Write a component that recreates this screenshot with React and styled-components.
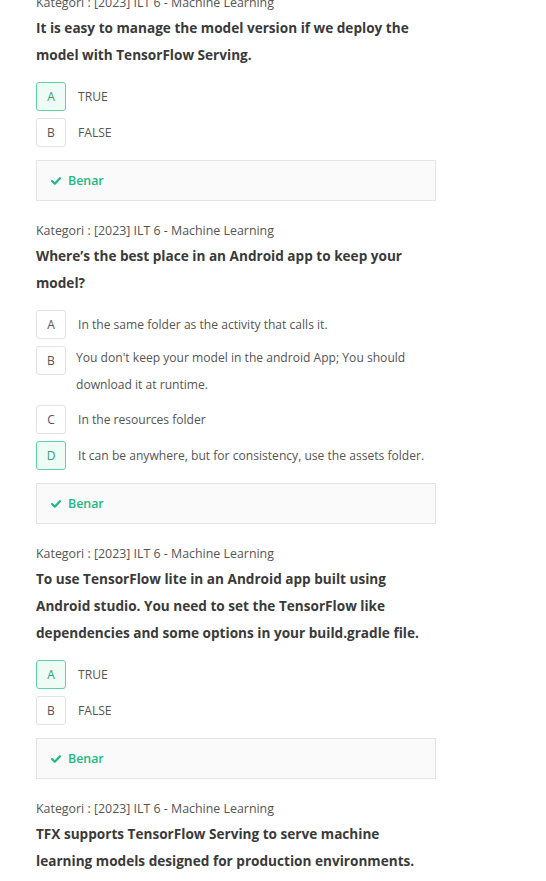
import React from "react";
import styled, { createGlobalStyle } from "styled-components";

const GlobalStyle = createGlobalStyle`
  html, body {
    margin: 0;
    padding: 0;
    background: #ffffff;
    font-family: "Open Sans", "Noto Sans", sans-serif;
  }
`;

const questions = [
  {
    text: "It is easy to manage the model version if we deploy the model with TensorFlow Serving.",
    options: [
      { key: "A", label: "TRUE", picked: true },
      { key: "B", label: "FALSE" },
    ],
  },
  {
    text: "Where\u2019s the best place in an Android app to keep your model?",
    options: [
      { key: "A", label: "In the same folder as the activity that calls it." },
      {
        key: "B",
        label:
          "You don't keep your model in the android App; You should download it at runtime.",
      },
      { key: "C", label: "In the resources folder" },
      {
        key: "D",
        label: "It can be anywhere, but for consistency, use the assets folder.",
        picked: true,
      },
    ],
  },
  {
    text: "To use TensorFlow lite in an Android app built using Android studio. You need to set the TensorFlow like dependencies and some options in your build.gradle file.",
    options: [
      { key: "A", label: "TRUE", picked: true },
      { key: "B", label: "FALSE" },
    ],
  },
  {
    text: "TFX supports TensorFlow Serving to serve machine learning models designed for production environments.",
    options: [],
  },
];

const CheckIcon = () => (
  <svg width="10" height="8" viewBox="0 0 10 8">
    <path
      d="M1 4 L3.8 6.7 L9 1.2"
      fill="none"
      stroke="#22b883"
      strokeWidth="2.2"
      strokeLinecap="round"
      strokeLinejoin="round"
    />
  </svg>
);

const App = () => {
  return (
    <>
      <GlobalStyle />
      <Page>
        {questions.map((q, i) => (
          <Question key={i}>
            <Category>Kategori : [2023] ILT 6 - Machine Learning</Category>
            <Title>{q.text}</Title>
            {q.options.length > 0 && (
              <>
                <Options>
                  {q.options.map((o) => (
                    <Option key={o.key}>
                      <Letter $picked={o.picked}>{o.key}</Letter>
                      <OptionText $wide={o.label.length > 70}>{o.label}</OptionText>
                    </Option>
                  ))}
                </Options>
                <Result>
                  <CheckIcon />
                  Benar
                </Result>
              </>
            )}
          </Question>
        ))}
      </Page>
    </>
  );
};

const Page = styled.div`
  width: 400px;
  margin: -6px 0 0 36px;
  display: flex;
  flex-direction: column;
  gap: 21px;
`;

const Question = styled.div`
  display: flex;
  flex-direction: column;
`;

const Category = styled.div`
  font-size: 12.4px;
  line-height: 18px;
  color: #555555;
  margin-bottom: 2px;
`;

const Title = styled.div`
  font-size: 13.6px;
  line-height: 27px;
  font-weight: 700;
  color: #3a3a3a;
  margin-bottom: 14px;
`;

const Options = styled.div`
  display: flex;
  flex-direction: column;
  gap: 7px;
  margin-bottom: 13px;
`;

const Option = styled.div`
  display: flex;
  align-items: flex-start;
`;

const Letter = styled.div`
  flex: none;
  box-sizing: border-box;
  width: 30px;
  height: 29px;
  display: flex;
  align-items: center;
  justify-content: center;
  font-size: 12px;
  color: ${(p) => (p.$picked ? "#2f9e74" : "#555555")};
  background: ${(p) => (p.$picked ? "#effcf6" : "#ffffff")};
  border: 1px solid ${(p) => (p.$picked ? "#5fd3a8" : "#e3e3e3")};
  border-radius: 3px;
`;

const OptionText = styled.div`
  margin-top: ${(p) => (p.$wide ? "-2px" : "0")};
  padding: ${(p) => (p.$wide ? "0 0 0 10px" : "1px 0 0 12px")};
  font-size: 12.1px;
  line-height: 27px;
  color: #555555;
`;

const Result = styled.div`
  box-sizing: border-box;
  height: 41px;
  display: flex;
  align-items: center;
  gap: 7px;
  padding-left: 14px;
  background: #fafafa;
  border: 1px solid #e4e4e4;
  font-size: 12.4px;
  font-weight: 600;
  color: #22b883;
`;

export default App;
